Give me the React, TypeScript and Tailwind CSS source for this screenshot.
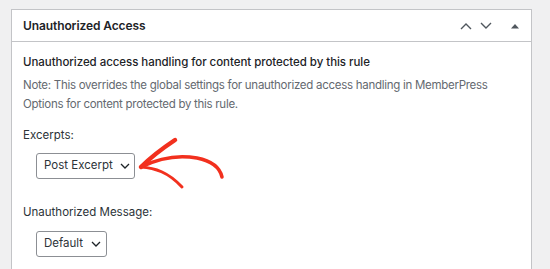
import React from "react";

function Chevron({ className = "" }: { className?: string }) {
  return (
    <svg width="10" height="6" viewBox="0 0 10 6" className={className} fill="none">
      <path d="M1 1l4 4 4-4" stroke="#1d2327" strokeWidth="1.3" />
    </svg>
  );
}

export default function App() {
  return (
    <div
      className="w-[550px] h-[269px] bg-[#f0f0f1] overflow-hidden relative"
      style={{ fontFamily: "Inter, 'Noto Sans', sans-serif" }}
    >
      <div className="ml-[11px] mt-[9px] w-[521px] h-[280px] bg-white border border-[#c3c4c7]">
        <div className="h-[32px] border-b border-[#c3c4c7] flex items-center pl-[11px] pr-[12px]">
          <div className="text-[12px] font-semibold text-[#1d2327] tracking-[-0.1px]">Unauthorized Access</div>
          <div className="ml-auto flex items-center">
            <svg width="12" height="8" viewBox="0 0 12 8" fill="none" className="mr-[8px]">
              <path d="M1 7l5-5 5 5" stroke="#50575e" strokeWidth="1.4" />
            </svg>
            <svg width="12" height="8" viewBox="0 0 12 8" fill="none" className="mr-[19px]">
              <path d="M1 1l5 5 5-5" stroke="#50575e" strokeWidth="1.4" />
            </svg>
            <svg width="8" height="6" viewBox="0 0 8 6">
              <path d="M0 5.5L4 1l4 4.5z" fill="#50575e" />
            </svg>
          </div>
        </div>
        <div className="pl-[11px] pt-[11px] text-[11.5px] text-[#1d2327]">
          <div className="font-medium leading-[18px] tracking-[-0.05px]">Unauthorized access handling for content protected by this rule</div>
          <div className="mt-[5px] text-[#646970] leading-[19px] tracking-[-0.28px]">
            Note: This overrides the global settings for unauthorized access handling in MemberPress
            <br />
            Options for content protected by this rule.
          </div>
          <div className="mt-[12px] leading-[18px] text-[#2c3338]">Excerpts:</div>
          <div className="mt-[9px] ml-[13px] flex">
            <div className="h-[26px] w-[99px] border border-[#8c8f94] rounded-[3px] flex items-center pl-[7px] gap-[7px] text-[11.5px] text-[#2c3338]">
              <span>Post Excerpt</span>
              <Chevron />
            </div>
          </div>
          <div className="mt-[24px] leading-[18px] text-[#2c3338]">Unauthorized Message:</div>
          <div className="mt-[10px] ml-[13px] flex">
            <div className="h-[26px] w-[71px] border border-[#8c8f94] rounded-[3px] flex items-center pl-[7px] gap-[8px] text-[11.5px] text-[#2c3338]">
              <span>Default</span>
              <Chevron />
            </div>
          </div>
        </div>
      </div>
      <svg className="absolute left-0 top-0" width="550" height="269" fill="none">
        <g stroke="#f2301e" strokeLinecap="round" strokeLinejoin="round">
          <path d="M141 167 C 150 158, 160 150, 175 140" strokeWidth="4.5" />
          <path d="M141 167 C 155 168, 168 172, 182 187" strokeWidth="3" />
          <path d="M141 167 C 155 160, 175 154, 197 158 C 212 161, 220 168, 222 177" strokeWidth="3.5" />
        </g>
      </svg>
    </div>
  );
}
